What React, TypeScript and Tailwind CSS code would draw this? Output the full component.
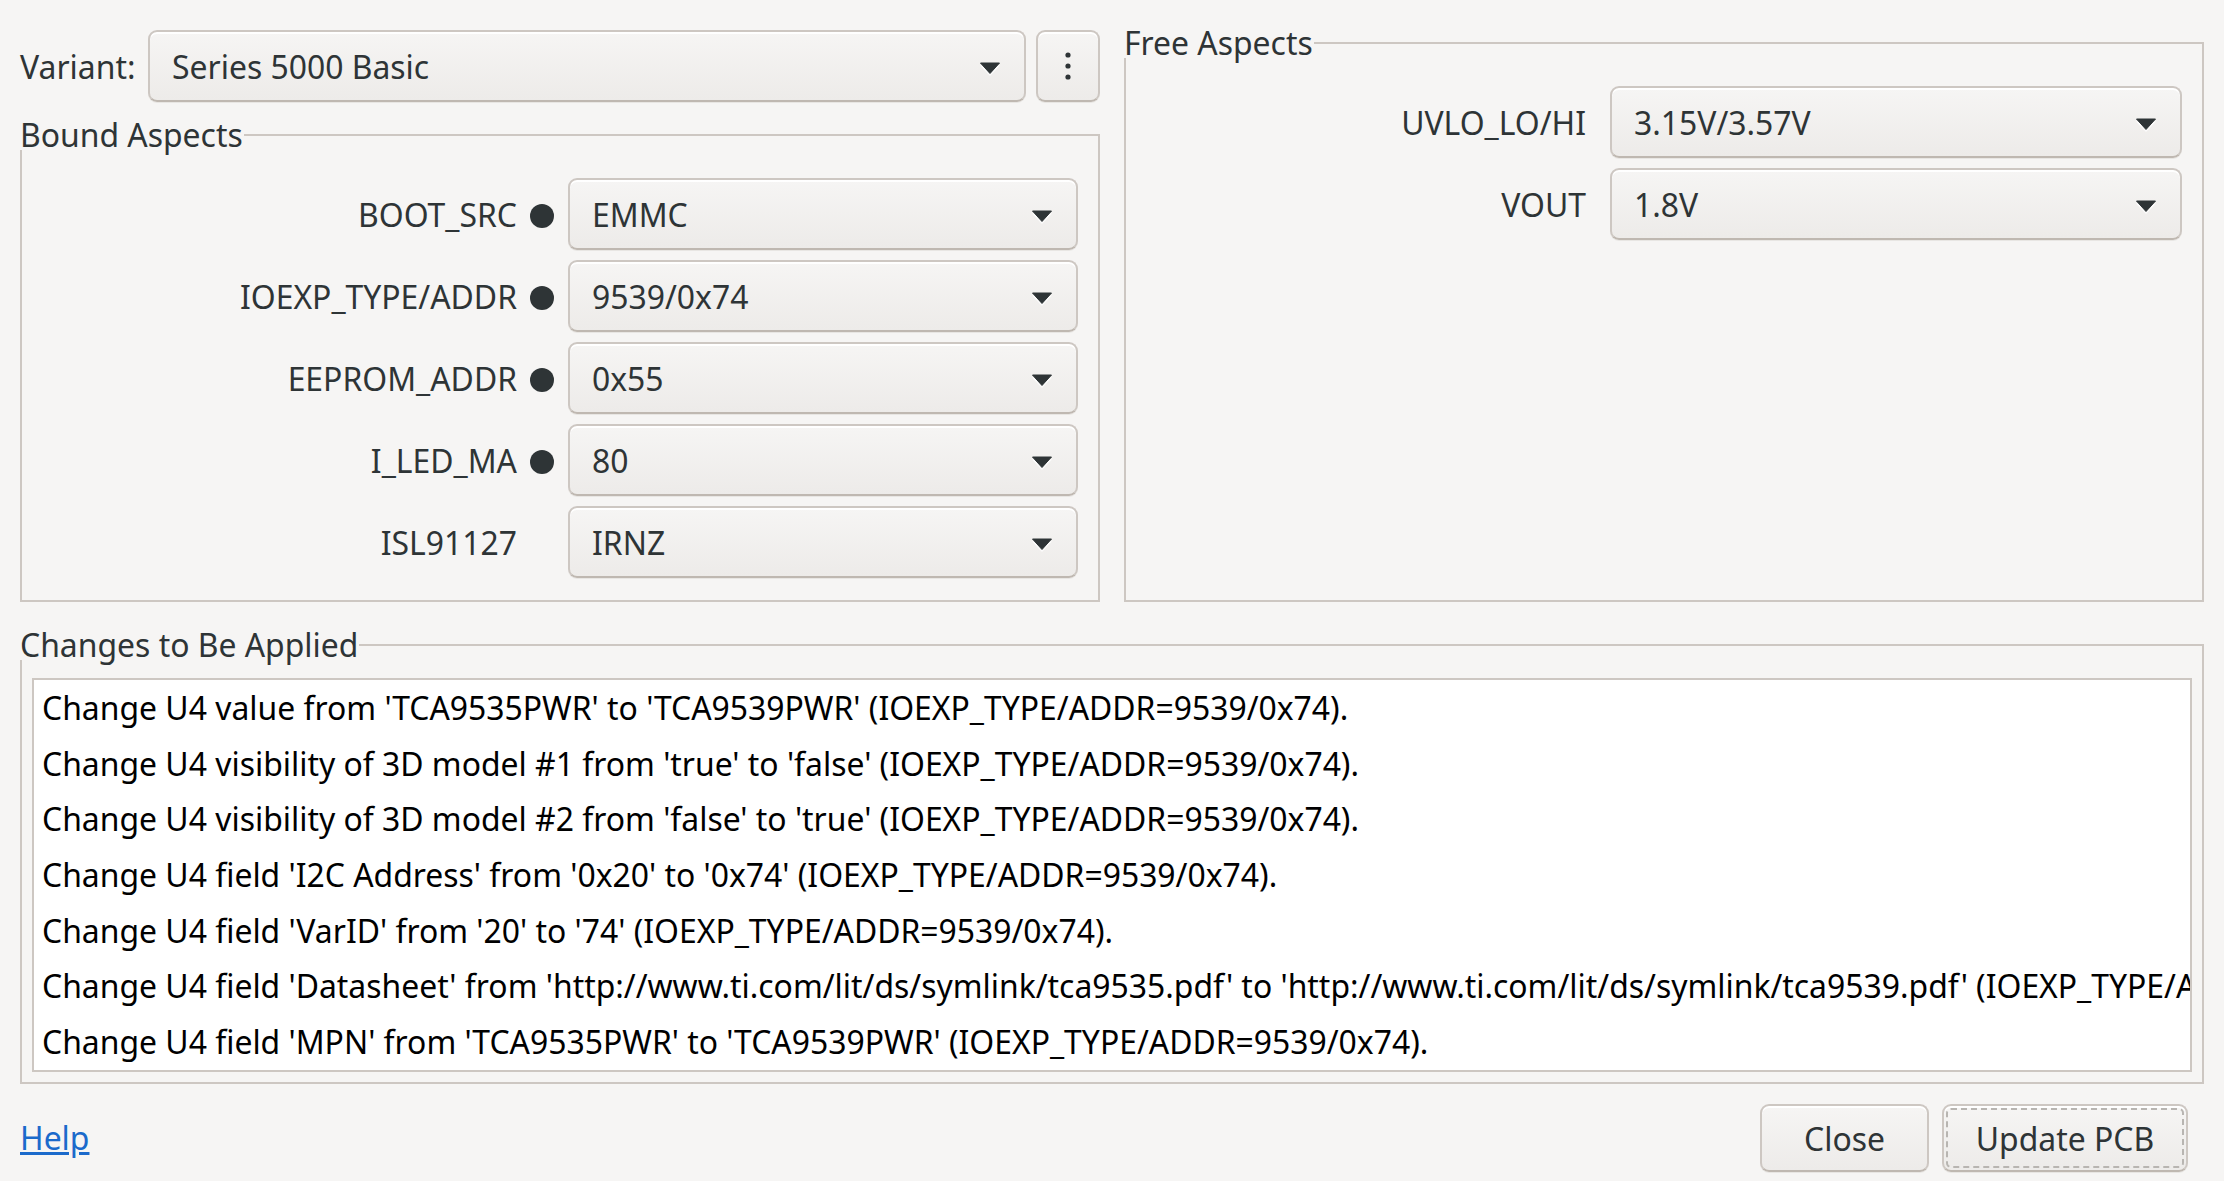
import React from "react";

const comboSkin =
  "rounded-[9px] border-2 border-[#cdc7c2] border-b-[#bfb8b1] bg-gradient-to-b from-[#f6f5f4] to-[#edebe9] shadow-[inset_0_2px_0_#ffffff,0_1px_0_#e8e6e3]";

function Arrow() {
  return (
    <svg width="22" height="14" viewBox="0 0 22 14" className="mt-[5px] shrink-0">
      <path d="M1 2.5 H21 L11 13 Z" fill="#ffffff" transform="translate(0 1)" opacity="0.8" />
      <path d="M1.5 1 H20.5 L11 11.5 Z" fill="#2e3436" stroke="#2e3436" strokeLinejoin="round" />
    </svg>
  );
}

function Combo({ value, className }: { value: string; className: string }) {
  return (
    <div className={`flex h-[72px] items-center justify-between pl-[22px] pr-[23px] ${comboSkin} ${className}`}>
      <span className="pt-[2px]">{value}</span>
      <Arrow />
    </div>
  );
}

function Group({ title, className, children }: { title: string; className: string; children: React.ReactNode }) {
  return (
    <div className={`relative border-2 border-[#cdc7c2] ${className}`}>
      <div className="absolute left-[-2px] top-[-20px] h-[34px] bg-[#f6f5f4] pr-[1px] leading-[38px]">{title}</div>
      {children}
    </div>
  );
}

const bound = [
  { label: "BOOT_SRC", value: "EMMC", dot: true },
  { label: "IOEXP_TYPE/ADDR", value: "9539/0x74", dot: true },
  { label: "EEPROM_ADDR", value: "0x55", dot: true },
  { label: "I_LED_MA", value: "80", dot: true },
  { label: "ISL91127", value: "IRNZ", dot: false },
];

const free = [
  { label: "UVLO_LO/HI", value: "3.15V/3.57V" },
  { label: "VOUT", value: "1.8V" },
];

const changes = [
  "Change U4 value from 'TCA9535PWR' to 'TCA9539PWR' (IOEXP_TYPE/ADDR=9539/0x74).",
  "Change U4 visibility of 3D model #1 from 'true' to 'false' (IOEXP_TYPE/ADDR=9539/0x74).",
  "Change U4 visibility of 3D model #2 from 'false' to 'true' (IOEXP_TYPE/ADDR=9539/0x74).",
  "Change U4 field 'I2C Address' from '0x20' to '0x74' (IOEXP_TYPE/ADDR=9539/0x74).",
  "Change U4 field 'VarID' from '20' to '74' (IOEXP_TYPE/ADDR=9539/0x74).",
  "Change U4 field 'Datasheet' from 'http://www.ti.com/lit/ds/symlink/tca9535.pdf' to 'http://www.ti.com/lit/ds/symlink/tca9539.pdf' (IOEXP_TYPE/ADDR=9539/0x74).",
  "Change U4 field 'MPN' from 'TCA9535PWR' to 'TCA9539PWR' (IOEXP_TYPE/ADDR=9539/0x74).",
];

export default function App() {
  return (
    <div className="flex h-[1181px] w-[2224px] flex-col overflow-hidden bg-[#f6f5f4] px-[20px] pt-[30px] font-['Noto_Sans',sans-serif] text-[31.9px] text-[#2e3436]">
      <div className="flex gap-[24px]">
        <div className="flex w-[1080px] flex-col gap-[32px]">
          <div className="flex items-center">
            <span className="w-[128px] pt-[2px]">Variant:</span>
            <Combo value="Series 5000 Basic" className="w-[878px]" />
            <div className={`ml-[10px] flex h-[72px] w-[64px] items-center justify-center ${comboSkin}`}>
              <svg width="6" height="28" viewBox="0 0 6 28">
                <circle cx="3" cy="3" r="2.6" fill="#2e3436" />
                <circle cx="3" cy="14" r="2.6" fill="#2e3436" />
                <circle cx="3" cy="25" r="2.6" fill="#2e3436" />
              </svg>
            </div>
          </div>
          <Group title="Bound Aspects" className="h-[468px] pr-[20px] pt-[42px]">
            <div className="flex flex-col gap-[10px]">
              {bound.map((r) => (
                <div key={r.label} className="flex h-[72px] items-center">
                  <span className="flex-1 pt-[2px] text-right">{r.label}</span>
                  <span className="ml-[13px] mr-[14px] mt-[4px] flex w-[24px] justify-center">
                    {r.dot && <span className="h-[24px] w-[24px] rounded-full bg-[#2e3436]" />}
                  </span>
                  <Combo value={r.value} className="w-[510px]" />
                </div>
              ))}
            </div>
          </Group>
        </div>
        <Group title="Free Aspects" className="mt-[12px] h-[560px] flex-1 pr-[20px] pt-[42px]">
          <div className="flex flex-col gap-[10px]">
            {free.map((r) => (
              <div key={r.label} className="flex h-[72px] items-center">
                <span className="flex-1 pt-[2px] text-right">{r.label}</span>
                <Combo value={r.value} className="ml-[24px] w-[572px]" />
              </div>
            ))}
          </div>
        </Group>
      </div>

      <Group title="Changes to Be Applied" className="mt-[42px] h-[440px] px-[10px] pt-[32px]">
        <div className="h-[394px] overflow-hidden border-2 border-[#cdc7c2] bg-white pl-[8px] text-black">
          {changes.map((c) => (
            <div key={c} className="h-[55.7px] whitespace-nowrap leading-[55px]">
              {c}
            </div>
          ))}
        </div>
      </Group>

      <div className="mt-[20px] flex items-center justify-between pr-[16px]">
        <a className="text-[#1b6acb] underline">Help</a>
        <div className="flex gap-[13px]">
          <div className={`flex h-[68px] w-[169px] items-center justify-center pt-[1px] ${comboSkin}`}>Close</div>
          <div
            className={`flex h-[68px] w-[246px] items-center justify-center pt-[1px] outline-2 outline-offset-[-6px] outline-dashed outline-[#b8b5b1] ${comboSkin}`}
          >
            Update PCB
          </div>
        </div>
      </div>
    </div>
  );
}
